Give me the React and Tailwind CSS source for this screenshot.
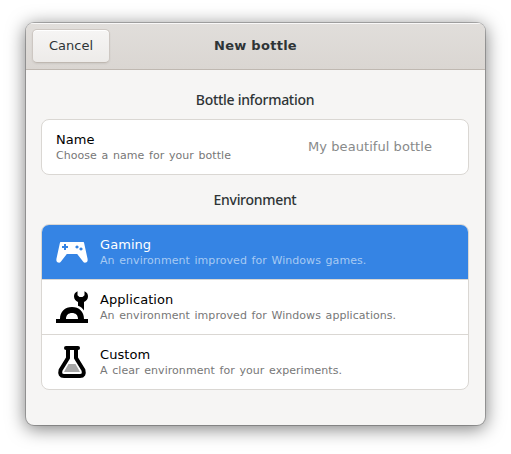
import React from "react";

function GamepadIcon() {
  return (
    <svg width="32" height="32" viewBox="0 0 32 32" className="shrink-0">
      <path
        fill="#fff"
        fillRule="evenodd"
        d="M4.6 6 Q4.1 6 4 6.6 L0.4 23 Q0 26.2 2.4 26.6 Q4 26.9 5 25.4 L10.8 18 H21.2 L27 25.4 Q28 26.9 29.6 26.6 Q32 26.2 31.6 23 L28 6.6 Q27.9 6 27.4 6 Z M8 8 H10 V10 H12 V12 H10 V14 H8 V12 H6 V10 H8 Z M21 9.4 a1.6 1.6 0 1 0 0.01 0 Z M25 11.4 a1.6 1.6 0 1 0 0.01 0 Z"
      />
    </svg>
  );
}

function EngineeringIcon() {
  return (
    <svg width="32" height="32" viewBox="0 0 32 32" className="shrink-0">
      <path
        fill="#000"
        fillRule="evenodd"
        d="M0 32 V28 H4 C4 20.5 9 16 16 16 C23 16 28 20.5 28 28 H32 V32 Z M10 28 H22 C22 24 19.5 22 16 22 C12.5 22 10 24 10 28 Z"
      />
      <path
        fill="#000"
        d="M21.5 0.2 V4.2 L23.5 6 H26.5 L28.5 4.2 V0.2 C30.8 1.2 32 3 32 5.2 C32 8 30.5 9.8 28 11 V19.5 C26.5 17.2 24.5 15.6 22 14.7 V11 C19.5 9.8 18 8 18 5.2 C18 3 19.2 1.2 21.5 0.2 Z"
      />
    </svg>
  );
}

function FlaskIcon() {
  return (
    <svg width="32" height="32" viewBox="0 0 32 32" className="shrink-0">
      <path fill="#a6a6a6" d="M12.5 18 H19.5 L23.8 25.4 Q23.8 26 23 26 H9 Q8.2 26 8.2 25.4 Z" />
      <path
        fill="none"
        stroke="#000"
        strokeWidth="4"
        strokeLinejoin="round"
        d="M12 3 V12 L4.6 24 Q3 30 8 30 H24 Q29 30 27.4 24 L20 12 V3"
      />
      <path stroke="#000" strokeWidth="4" strokeLinecap="round" d="M10 2 H22" />
    </svg>
  );
}

const environments = [
  { name: "Gaming", text: "An environment improved for Windows games.", Icon: GamepadIcon, selected: true },
  { name: "Application", text: "An environment improved for Windows applications.", Icon: EngineeringIcon },
  { name: "Custom", text: "A clear environment for your experiments.", Icon: FlaskIcon },
];

function Labels({ title, text, selected }) {
  return (
    <div className="flex flex-col whitespace-nowrap">
      <span className={`text-[13px] leading-4 tracking-[0.06px] ${selected ? "text-white" : "text-black"}`}>{title}</span>
      <span className={`text-[11px] leading-[15px] tracking-[0.05px] [word-spacing:1.1px] ${selected ? "text-[#a7caf3]" : "text-[#777777]"}`}>{text}</span>
    </div>
  );
}

function SectionTitle({ children }) {
  return (
    <h2 className="text-center font-['Noto_Sans',sans-serif] text-[14px] leading-5 font-medium tracking-[-0.3px] text-[#2e3436]">
      {children}
    </h2>
  );
}

export default function App() {
  return (
    <div className="h-[454px] w-[511px] overflow-hidden bg-white pt-[23px] pl-[26px] font-['DejaVu_Sans',sans-serif]">
      <div className="flex h-[402px] w-[459px] flex-col overflow-hidden rounded-lg bg-[#f6f5f4] shadow-[0_3px_18px_1px_rgba(0,0,0,0.5),0_0_0_1px_rgba(0,0,0,0.23)]">
        <header className="grid h-[47px] shrink-0 grid-cols-[1fr_auto_1fr] items-center border-b border-[#bfb8b1] bg-linear-to-b from-[#e1dedb] to-[#dad6d2] px-1.5 shadow-[inset_0_1px_#f9f8f8]">
          <button className="h-[34px] w-[78px] justify-self-start rounded-[5px] border border-[#cdc7c2] border-b-[#bfb8b1] bg-linear-to-b from-[#f6f5f4] to-[#edebe9] text-[13px] text-[#2e3436] shadow-[inset_0_1px_#ffffff,0_1px_2px_rgba(0,0,0,0.07)]">
            Cancel
          </button>
          <h1 className="text-[13px] leading-4 font-bold tracking-[0.28px] text-[#2e3436]">New bottle</h1>
        </header>
        <main className="flex flex-col pt-5 pr-4 pl-[15px]">
          <SectionTitle>Bottle information</SectionTitle>
          <div className="mt-[9px] mb-[15px] flex h-14 items-center justify-between rounded-lg border border-[#dad7d3] bg-white pr-9 pl-3.5">
            <Labels title="Name" text="Choose a name for your bottle" />
            <span className="text-[13px] leading-4 tracking-[0.06px] text-[#888a8a]">My beautiful bottle</span>
          </div>
          <SectionTitle>Environment</SectionTitle>
          <ul className="mt-3.5 divide-y divide-[#dad7d3] overflow-hidden rounded-lg border border-[#dad7d3] bg-white">
            {environments.map(({ name, text, Icon, selected }) => (
              <li
                key={name}
                className={`flex h-[55px] items-center gap-3 pl-3.5 last:h-[54px] ${selected ? "bg-[#3584e4]" : ""}`}
              >
                <Icon />
                <Labels title={name} text={text} selected={selected} />
              </li>
            ))}
          </ul>
        </main>
      </div>
    </div>
  );
}
